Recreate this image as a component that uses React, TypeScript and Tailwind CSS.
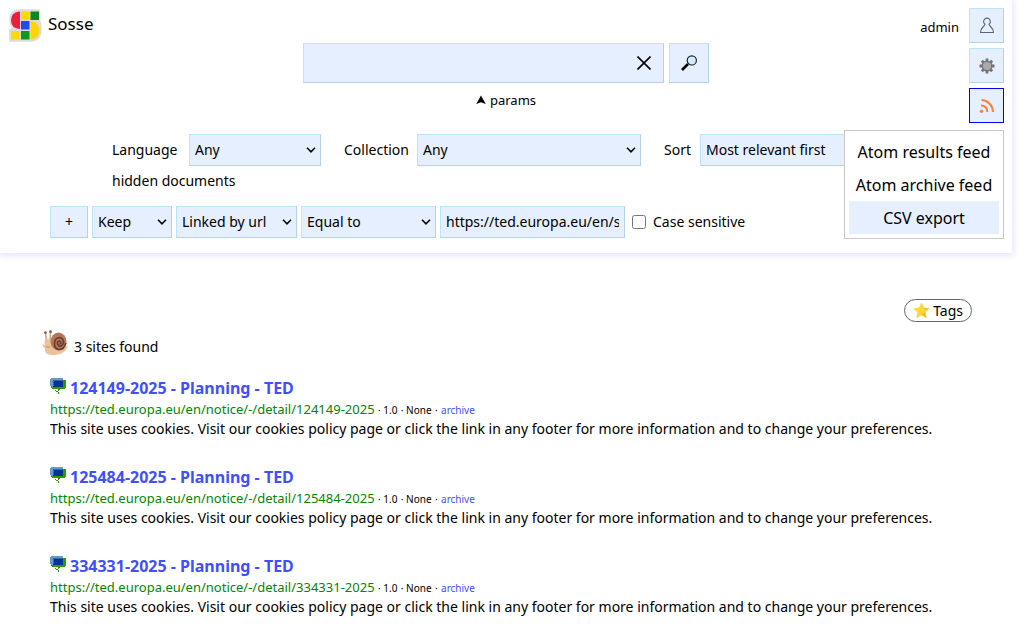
import React, { useState } from "react";

const field =
  "border border-t-[#bde3f7] border-l-[#bde3f7] border-r-[#b5d3e4] border-b-[#b5d3e4] bg-[#e6efff] text-black";

const results = ["124149-2025", "125484-2025", "334331-2025"];

function Select({ id, label, width, option }: { id: string; label?: string; width: string; option: string }) {
  return (
    <div className={`grid items-center ${width}`}>
      <select
        id={id}
        aria-label={label}
        className={`${field} col-start-1 row-start-1 h-8 w-full appearance-none pr-6 pb-px pl-[5px] text-sm`}
      >
        <option>{option}</option>
      </select>
      <svg
        viewBox="0 0 10 6"
        className="pointer-events-none col-start-1 row-start-1 mr-[5px] h-1.5 w-2.5 justify-self-end"
        fill="none"
        stroke="#000"
        strokeWidth="1.600"
        aria-hidden="true"
      >
        <path d="M1 0.800L5 4.800L9 0.800" />
      </svg>
    </div>
  );
}

function Logo() {
  return (
    <svg viewBox="0 0 34 34" className="size-[34px]" aria-hidden="true">
      <path
        d="M12 2H31V12Q33 15 33 21Q33 33 22 33H2V22L5 20Q2 17 2 11Q2 2 12 2Z"
        fill="#dcdcdc"
        stroke="#dcdcdc"
        strokeWidth="1.500"
        strokeLinejoin="round"
      />
      <path d="M12 3.500V21Q3 20.500 3 12Q3 4 12 3.500Z" fill="#e8203c" />
      <rect x="13" y="3.500" width="8.500" height="8.500" fill="#ffd900" />
      <rect x="22.500" y="3.500" width="8.500" height="8.500" fill="#0a8a1c" />
      <rect x="13" y="13" width="8.500" height="8.500" fill="#2447ee" />
      <path d="M22.500 13Q31.500 14 31.500 22Q31.500 31 22.500 31.500Z" fill="#ffd500" />
      <rect x="3" y="23" width="8.500" height="8.500" fill="#ffd900" />
      <rect x="13" y="23" width="8.500" height="8.500" fill="#0a9a1c" />
    </svg>
  );
}

function Person() {
  return (
    <svg viewBox="0 0 16 18" className="h-[18px] w-4" fill="none" stroke="#5c6672" strokeWidth="1.100" aria-hidden="true">
      <path d="M6 7.300A3.400 3.400 0 1 1 10 7.300C10.500 9.500 14.500 10.500 14.500 15.500H1.500C1.500 10.500 5.500 9.500 6 7.300Z" />
    </svg>
  );
}

function Gear() {
  return (
    <svg viewBox="-8 -8 16 16" className="size-4" aria-hidden="true">
      <g stroke="#737373" strokeWidth="2.800">
        <path d="M0-7.500V7.500M-7.500 0H7.500M-5.200-5.200L5.200 5.200M5.200-5.200L-5.200 5.200" />
      </g>
      <circle r="4.800" fill="#aaa" stroke="#777" strokeWidth="1.400" />
    </svg>
  );
}

function Feed() {
  return (
    <svg viewBox="0 0 16 16" className="size-4" fill="none" stroke="#ff8038" strokeWidth="2" aria-hidden="true">
      <circle cx="2.500" cy="13.300" r="1.700" fill="#ff8038" stroke="none" />
      <path d="M2 7.500A6 6 0 0 1 8.300 14M2.500 2A12 12 0 0 1 14 14" />
    </svg>
  );
}

function Snail() {
  return (
    <svg viewBox="0 0 26 26" className="h-[26px] w-[26px]" aria-hidden="true">
      <path d="M3.500 2.500L4.500 11M8.500 1.500L8 11" stroke="#d9a983" strokeWidth="1.700" />
      <circle cx="3.400" cy="2.600" r="1.400" fill="#8d5a48" />
      <circle cx="8.500" cy="1.700" r="1.400" fill="#8d5a48" />
      <path d="M0 14L3 15Q1 9 6 9Q10 9 10 14L14 19L26 16Q24 22 18 24Q10 26 5 24Q2 21 3 18Q1 17 0 14Z" fill="#eac39c" />
      <ellipse cx="16.500" cy="11.500" rx="8" ry="9" fill="#b67659" />
      <path
        d="M24 13Q22 20 16.500 19.500Q12 18 12.500 13Q13 7.500 18 7.500Q22 9 21.500 13Q20 17 17 16Q14.500 14 16 11.500Q18 10 19 12.500Q19 14 17.500 14"
        fill="none"
        stroke="#633b32"
        strokeWidth="1.500"
      />
      <path d="M4 16.500Q5.500 18 8 16.500" fill="none" stroke="#ad745a" strokeWidth=".7" />
    </svg>
  );
}

function SiteIcon() {
  return (
    <svg viewBox="0 0 16 16" className="mt-px size-4 shrink-0" shapeRendering="crispEdges" aria-hidden="true">
      <path d="M1 0H13V2H3V9H1V8H0V1H1Z" fill="#6699cc" />
      <path d="M13 2H16V10H15V11H2V10H1V9H13Z" fill="#339900" />
      <rect x="3" y="2" width="10" height="7" fill="#003399" />
      <path d="M3 2H13V3H4V8H3Z" fill="#336699" />
      <path d="M5 12H6V13H5ZM6 13H8V14H6ZM8 11H10V12H9V13H8ZM8 14H9V16H8Z" fill="#339900" />
    </svg>
  );
}

export default function App() {
  const [query, setQuery] = useState("");
  const [url, setUrl] = useState("https://ted.europa.eu/en/search/result");

  return (
    <div className="bg-white font-['Noto_Sans',sans-serif] text-sm text-black">
      <header className="relative mr-3 pb-[15px] shadow-[0_1px_6px_2px_#e6e6ff]">
        <div className="grid grid-cols-[1fr_auto_1fr] px-2 pt-2">
          <a href="#home" className="flex h-[34px] items-center gap-1.5 self-start text-[17px]">
            <Logo />
            <span className="pb-0.5">Sosse</span>
          </a>

          <form className="pt-[35px]" onSubmit={(e) => e.preventDefault()}>
            <div className="flex gap-[5px]">
              <div className={`${field} flex h-10 w-[361px] items-center`}>
                <input
                  aria-label="Search"
                  className="h-full min-w-0 flex-1 bg-transparent px-2 outline-none"
                  value={query}
                  onChange={(e) => setQuery(e.target.value)}
                />
                <button type="button" aria-label="Clear" className="flex w-[38px] justify-center" onClick={() => setQuery("")}>
                  <svg viewBox="0 0 14 14" className="size-3.5" stroke="#000" strokeWidth="1.600" aria-hidden="true">
                    <path d="M0.500 0.500L13.500 13.500M13.500 0.500L0.500 13.500" />
                  </svg>
                </button>
              </div>
              <button aria-label="Run search" className={`${field} flex size-10 items-center justify-center`}>
                <svg viewBox="0 0 16 16" className="size-4" aria-hidden="true">
                  <path d="M1 15L7 9" stroke="#000" strokeWidth="2.600" />
                  <circle cx="10.800" cy="5.400" r="4.600" fill="#d3eaff" stroke="#222" strokeWidth="1.200" />
                </svg>
              </button>
            </div>
            <button type="button" className="mx-auto mt-2 flex items-center gap-1 text-[13px] leading-[18px]">
              <svg viewBox="0 0 10 10" className="size-2.5" aria-hidden="true">
                <path d="M5 0.500L9.800 9L5 7.200L0.200 9Z" />
              </svg>
              params
            </button>
          </form>

          <div className="flex items-start justify-end gap-2.5">
            <span className="pt-2.5 text-[13px] leading-[18px]">admin</span>
            <div className="flex flex-col gap-[5px]">
              <button aria-label="User" className={`${field} flex size-[35px] items-center justify-center`}>
                <Person />
              </button>
              <button aria-label="Settings" className={`${field} flex size-[35px] items-center justify-center`}>
                <Gear />
              </button>
              <button
                aria-label="Feeds"
                aria-expanded="true"
                className="flex size-[35px] items-center justify-center border border-[#0000ff] bg-[#e6efff]"
              >
                <Feed />
              </button>
            </div>
          </div>
        </div>

        <div className="absolute top-[130px] right-2 z-10 flex w-40 flex-col border border-[#c8c8c8] bg-white p-1 text-center text-base">
          <a href="#results" className="h-[33px] leading-[35px]">Atom results feed</a>
          <a href="#archive" className="h-[33px] leading-[35px]">Atom archive feed</a>
          <a href="#csv" className="h-[33px] bg-[#e6efff] leading-[35px]">CSV export</a>
        </div>

        <div className="mt-[11px] pl-28">
          <div className="flex items-center">
            <label htmlFor="language" className="w-[77px]">Language</label>
            <Select id="language" width="w-[132px]" option="Any" />
            <label htmlFor="collection" className="ml-[23px] w-[73px]">Collection</label>
            <Select id="collection" width="w-56" option="Any" />
            <label htmlFor="sort" className="ml-[23px] w-9">Sort</label>
            <Select id="sort" width="w-[184px]" option="Most relevant first" />
          </div>
          <p className="mt-[5px] leading-5">hidden documents</p>
        </div>

        <div className="mt-[15px] flex items-center gap-1 pl-[50px]">
          <button className={`${field} h-8 w-[38px]`}>+</button>
          <Select id="action" label="Filter action" width="w-20" option="Keep" />
          <Select id="field" label="Filter field" width="w-[121px]" option="Linked by url" />
          <Select id="operator" label="Filter operator" width="w-[135px]" option="Equal to" />
          <input
            aria-label="Filter value"
            className={`${field} h-8 w-[185px] px-[5px] pb-0.5`}
            value={url}
            onChange={(e) => setUrl(e.target.value)}
          />
          <label className="ml-[3px] flex items-center gap-[7px]">
            <input type="checkbox" className="size-3.5" />
            Case sensitive
          </label>
        </div>
      </header>

      <main className="pr-[52px] pb-4 pl-[50px]">
        <div className="flex justify-end pt-[46px]">
          <button className="flex h-[23px] items-center gap-[3px] rounded-full border border-[#666] px-2">
            <svg viewBox="0 0 18 18" className="size-[17px]" aria-hidden="true">
              <path
                d="M9 1.200L11.300 6.400L17 7L12.800 10.800L14 16.500L9 13.600L4 16.500L5.200 10.800L1 7L6.700 6.400Z"
                fill="#fdd835"
                stroke="#fdd835"
                strokeLinejoin="round"
              />
              <path d="M12.800 10.800L14 16.500L9 13.600ZM11.300 6.400L17 7L13 8.500Z" fill="#f9b92b" />
            </svg>
            Tags
          </button>
        </div>

        <div className="-ml-2 mt-2 flex items-start gap-1.5">
          <Snail />
          <span className="pt-[7px] leading-5">3 sites found</span>
        </div>

        <div className="mt-5 flex flex-col gap-7">
          {results.map((id) => (
            <article key={id}>
              <h2 className="flex gap-1 text-base leading-[23px] font-bold text-[#4050ff]">
                <SiteIcon />
                <a href={`#${id}`}>{id} - Planning - TED</a>
              </h2>
              <p className="text-[13px] leading-[19px]">
                <a href={`#${id}`} className="text-[#008800]">
                  https://ted.europa.eu/en/notice/-/detail/{id}
                </a>{" "}
                <span className="text-[10px] leading-none">· 1.0</span>{" "}
                <span className="text-[10px] leading-none">· None</span>{" "}
                <span className="text-[10px] leading-none">·</span>{" "}
                <a href={`#archive-${id}`} className="text-[10px] leading-none text-[#4050ff]">archive</a>
              </p>
              <p className="leading-[19px]">
                This site uses cookies. Visit our cookies policy page or click the link in any footer for more
                information and to change your preferences.
              </p>
            </article>
          ))}
        </div>
      </main>
    </div>
  );
}
